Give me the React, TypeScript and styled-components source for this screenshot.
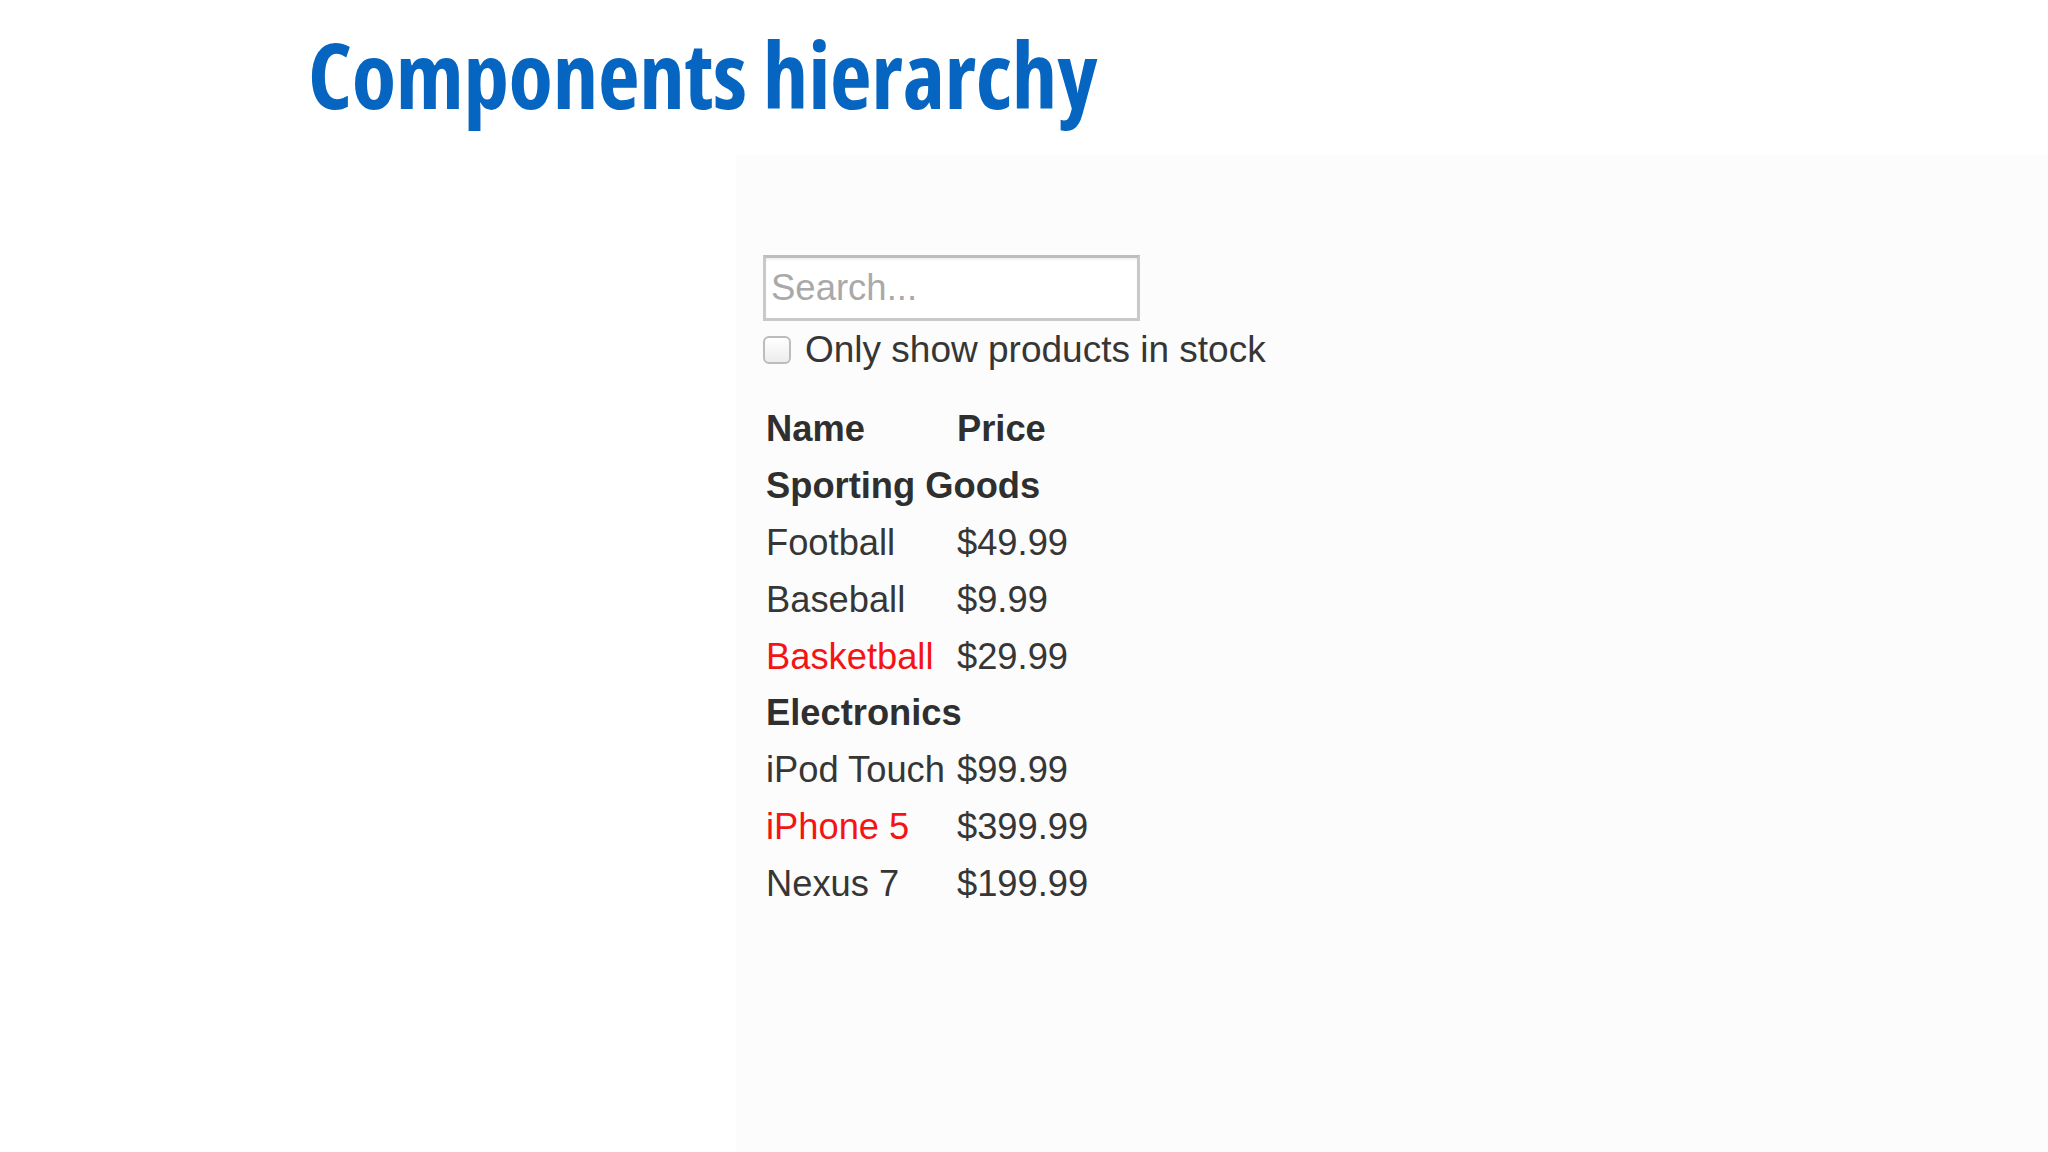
import React from "react";
import styled, { createGlobalStyle } from "styled-components";

const Global = createGlobalStyle`
  html, body {
    margin: 0;
    padding: 0;
    background: #ffffff;
  }
  body {
    width: 2048px;
    height: 1152px;
    overflow: hidden;
  }
`;

const Slide = styled.div`
  width: 2048px;
  height: 1152px;
  display: flex;
  flex-direction: column;
  background: #ffffff;
`;

const Title = styled.h1`
  margin: 0;
  padding: 29px 0 0 308px;
  height: 126px;
  box-sizing: border-box;
  font-family: "Open Sans", "Noto Sans", sans-serif;
  font-weight: 700;
  font-stretch: 75%;
  font-size: 91px;
  line-height: 91px;
  color: #0565c0;
  letter-spacing: -0.3px;
  white-space: nowrap;
`;

const Shot = styled.div`
  flex: 1;
  margin: 29px 0 0 736px;
  padding: 100px 0 0 27px;
  background: #fcfcfd;
  display: flex;
  flex-direction: column;
  font-family: "Liberation Sans", Arial, sans-serif;
  font-size: 36.3px;
  color: #363636;
`;

const SearchInput = styled.input`
  box-sizing: border-box;
  width: 377px;
  height: 66px;
  margin: 0;
  padding: 0 5px;
  border: 3px solid #c9c9c9;
  border-top-color: #bdbdbd;
  box-shadow: inset 0 2px 2px rgba(0, 0, 0, 0.06);
  background: #ffffff;
  font-family: "Liberation Sans", Arial, sans-serif;
  font-size: 36.5px;
  color: #363636;
  outline: none;
  &::placeholder {
    color: #a9a9a9;
  }
`;

const CheckRow = styled.label`
  display: flex;
  align-items: center;
  gap: 14px;
  height: 40px;
  margin-top: 9px;
  white-space: nowrap;
  font-size: 37px;
`;

const Box = styled.span`
  box-sizing: border-box;
  width: 28px;
  height: 28px;
  border: 2px solid #bcbcbc;
  border-radius: 6px;
  background: linear-gradient(#ffffff, #ececec);
`;

const Table = styled.table`
  margin-top: 31px;
  border-collapse: collapse;
  border-spacing: 0;
`;

const Cell = styled.td<{ $bold?: boolean; $red?: boolean; $first?: boolean }>`
  height: 56.8px;
  padding: 0 0 0 3px;
  vertical-align: middle;
  line-height: 40px;
  white-space: nowrap;
  text-align: left;
  font-weight: ${(p) => (p.$bold ? 700 : 400)};
  color: ${(p) => (p.$red ? "#f41414" : p.$bold ? "#2f2f2f" : "#363636")};
  width: ${(p) => (p.$first ? "188px" : "auto")};
`;

type Row =
  | { kind: "cat"; name: string }
  | { kind: "item"; name: string; price: string; out?: boolean };

const rows: Row[] = [
  { kind: "cat", name: "Sporting Goods" },
  { kind: "item", name: "Football", price: "$49.99" },
  { kind: "item", name: "Baseball", price: "$9.99" },
  { kind: "item", name: "Basketball", price: "$29.99", out: true },
  { kind: "cat", name: "Electronics" },
  { kind: "item", name: "iPod Touch", price: "$99.99" },
  { kind: "item", name: "iPhone 5", price: "$399.99", out: true },
  { kind: "item", name: "Nexus 7", price: "$199.99" },
];

export default function App() {
  return (
    <Slide>
      <Global />
      <Title>Components hierarchy</Title>
      <Shot>
        <SearchInput placeholder="Search..." readOnly />
        <CheckRow>
          <Box />
          Only show products in stock
        </CheckRow>
        <Table>
          <thead>
            <tr>
              <Cell as="th" $bold $first>
                Name
              </Cell>
              <Cell as="th" $bold>
                Price
              </Cell>
            </tr>
          </thead>
          <tbody>
            {rows.map((r, i) =>
              r.kind === "cat" ? (
                <tr key={i}>
                  <Cell $bold colSpan={2}>
                    {r.name}
                  </Cell>
                </tr>
              ) : (
                <tr key={i}>
                  <Cell $first $red={r.out}>
                    {r.name}
                  </Cell>
                  <Cell>{r.price}</Cell>
                </tr>
              )
            )}
          </tbody>
        </Table>
      </Shot>
    </Slide>
  );
}
